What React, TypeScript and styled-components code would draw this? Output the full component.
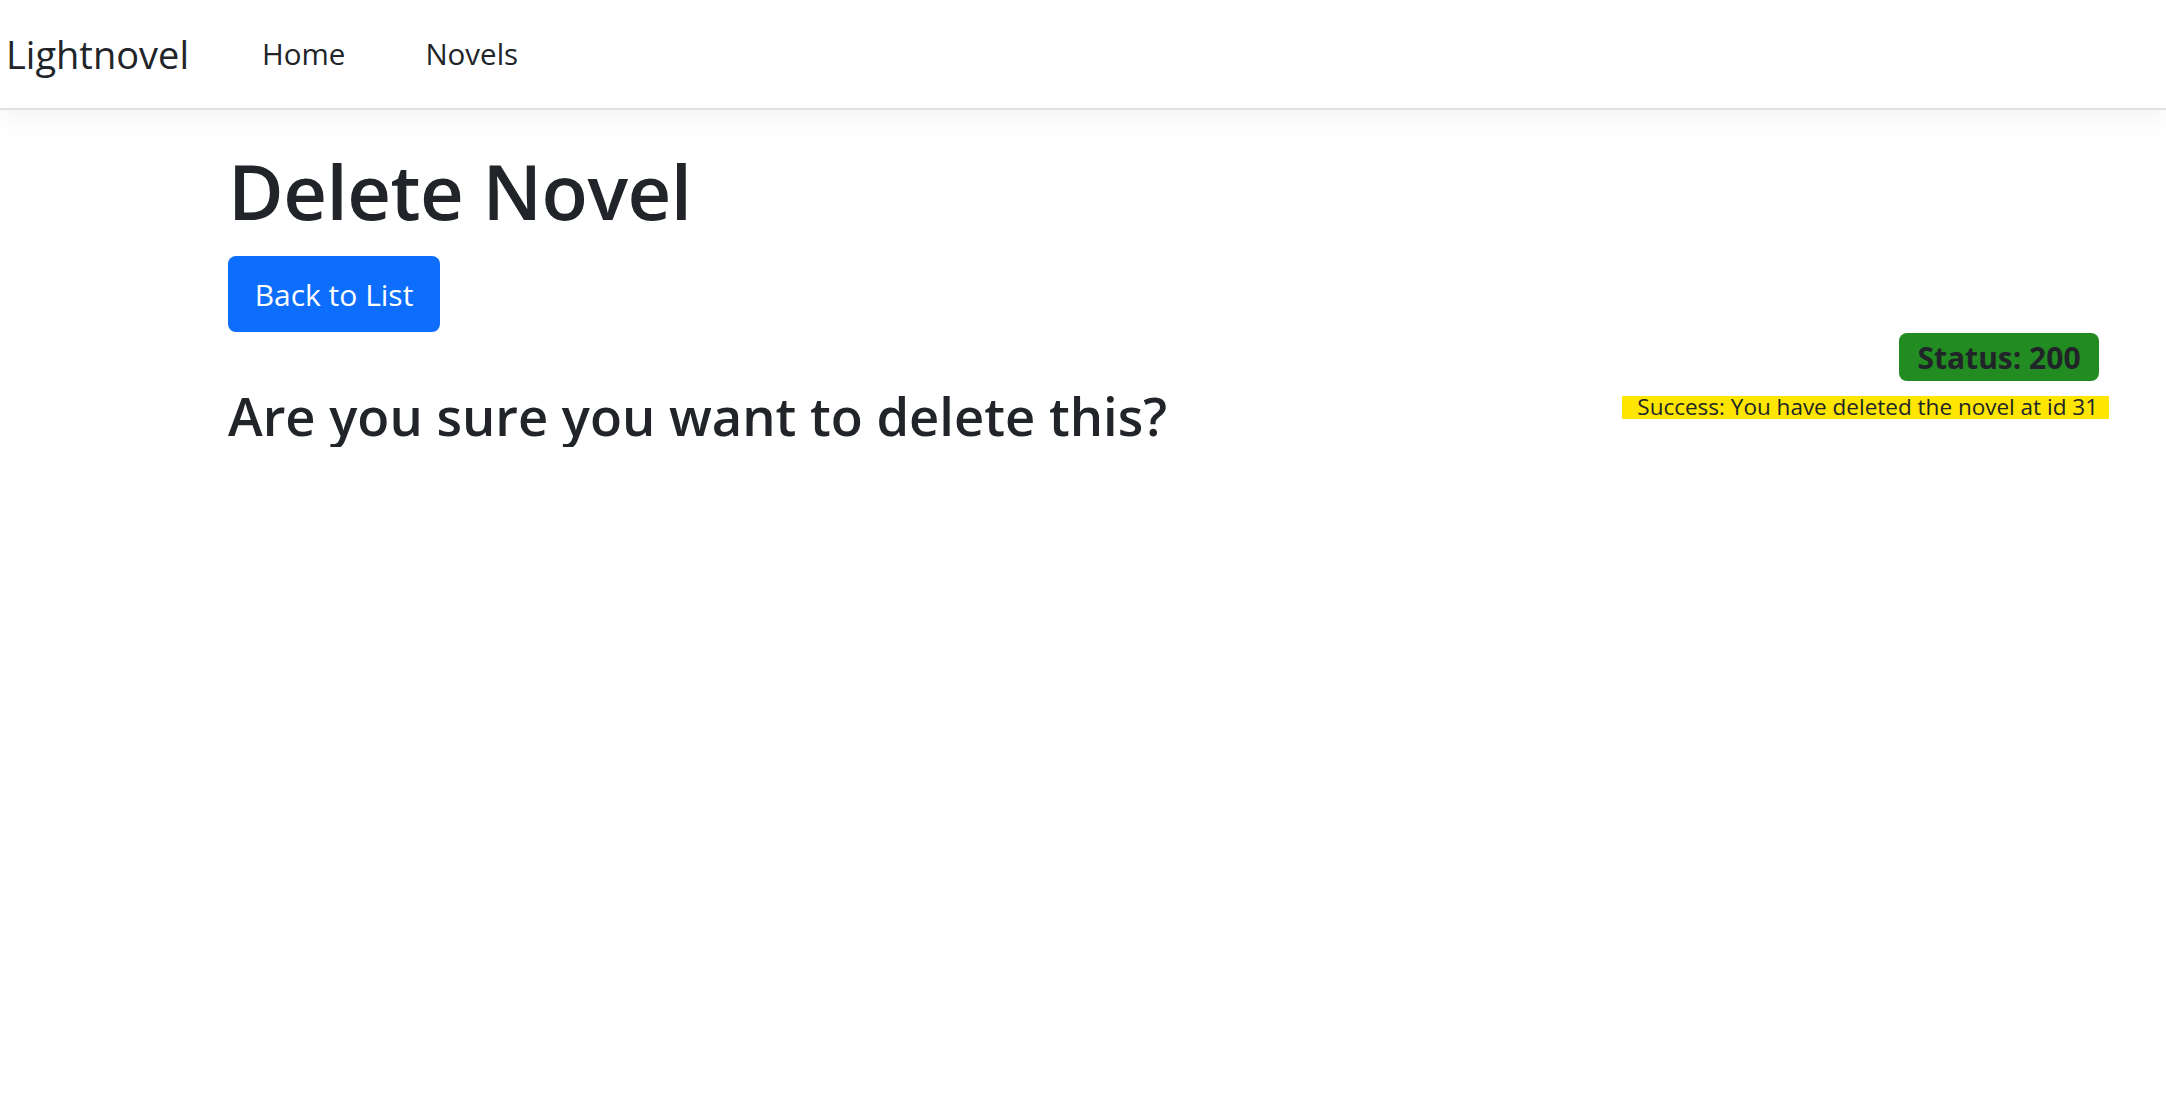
import React from "react";
import styled, { createGlobalStyle } from "styled-components";

const GlobalStyle = createGlobalStyle`
  html, body {
    margin: 0;
    padding: 0;
    background: #ffffff;
  }

  body {
    font-family: "Open Sans", "Noto Sans", sans-serif;
    color: #212529;
  }
`;

const Navbar = styled.nav`
  height: 108px;
  display: flex;
  align-items: center;
  background: #ffffff;
  border-bottom: 2px solid #dee2e6;
  box-shadow: 0 9px 26px rgba(0, 0, 0, 0.05);
  padding-left: 6px;
`;

const Brand = styled.a`
  font-size: 38px;
  font-weight: 400;
  color: #212529;
  text-decoration: none;
  line-height: 1;
  margin-right: 73px;
`;

const NavLink = styled.a`
  font-size: 29.5px;
  color: #212529;
  text-decoration: none;
  line-height: 1;
  & + & {
    margin-left: 80px;
  }
`;

const Main = styled.main`
  display: flex;
  justify-content: space-between;
  align-items: flex-start;
  padding: 43px 57px 0 228px;
`;

const Content = styled.section`
  display: flex;
  flex-direction: column;
  align-items: flex-start;
`;

const Title = styled.h1`
  margin: 0;
  font-size: 76px;
  font-weight: 600;
  line-height: 1;
  letter-spacing: -0.5px;
`;

const BackButton = styled.a`
  display: flex;
  align-items: center;
  justify-content: center;
  box-sizing: border-box;
  width: 212px;
  height: 76px;
  margin-top: 27px;
  background: #0d6efd;
  color: #ffffff;
  border-radius: 8px;
  font-size: 30px;
  text-decoration: none;
`;

const Question = styled.h3`
  margin: 52px 0 0;
  font-size: 52.5px;
  font-weight: 600;
  line-height: 1.2;
`;

const StatusPanel = styled.aside`
  display: flex;
  flex-direction: column;
  align-items: flex-end;
  margin-top: 180px;
`;

const StatusBadge = styled.div`
  display: flex;
  align-items: center;
  justify-content: center;
  width: 200px;
  height: 48px;
  margin-right: 10px;
  background: #228b22;
  border-radius: 8px;
  font-size: 30px;
  font-weight: 700;
  color: #212529;
`;

const StatusMessage = styled.div`
  margin-top: 15px;
  height: 23px;
  line-height: 21px;
  padding: 0 11px 0 15px;
  background: #ffe600;
  font-size: 22.5px;
  color: #212529;
  white-space: nowrap;
`;

export default function App() {
  return (
    <>
      <GlobalStyle />
      <Navbar>
        <Brand href="#">Lightnovel</Brand>
        <NavLink href="#">Home</NavLink>
        <NavLink href="#">Novels</NavLink>
      </Navbar>
      <Main>
        <Content>
          <Title>Delete Novel</Title>
          <BackButton href="#">Back to List</BackButton>
          <Question>Are you sure you want to delete this?</Question>
        </Content>
        <StatusPanel>
          <StatusBadge>Status: 200</StatusBadge>
          <StatusMessage>Success: You have deleted the novel at id 31</StatusMessage>
        </StatusPanel>
      </Main>
    </>
  );
}
